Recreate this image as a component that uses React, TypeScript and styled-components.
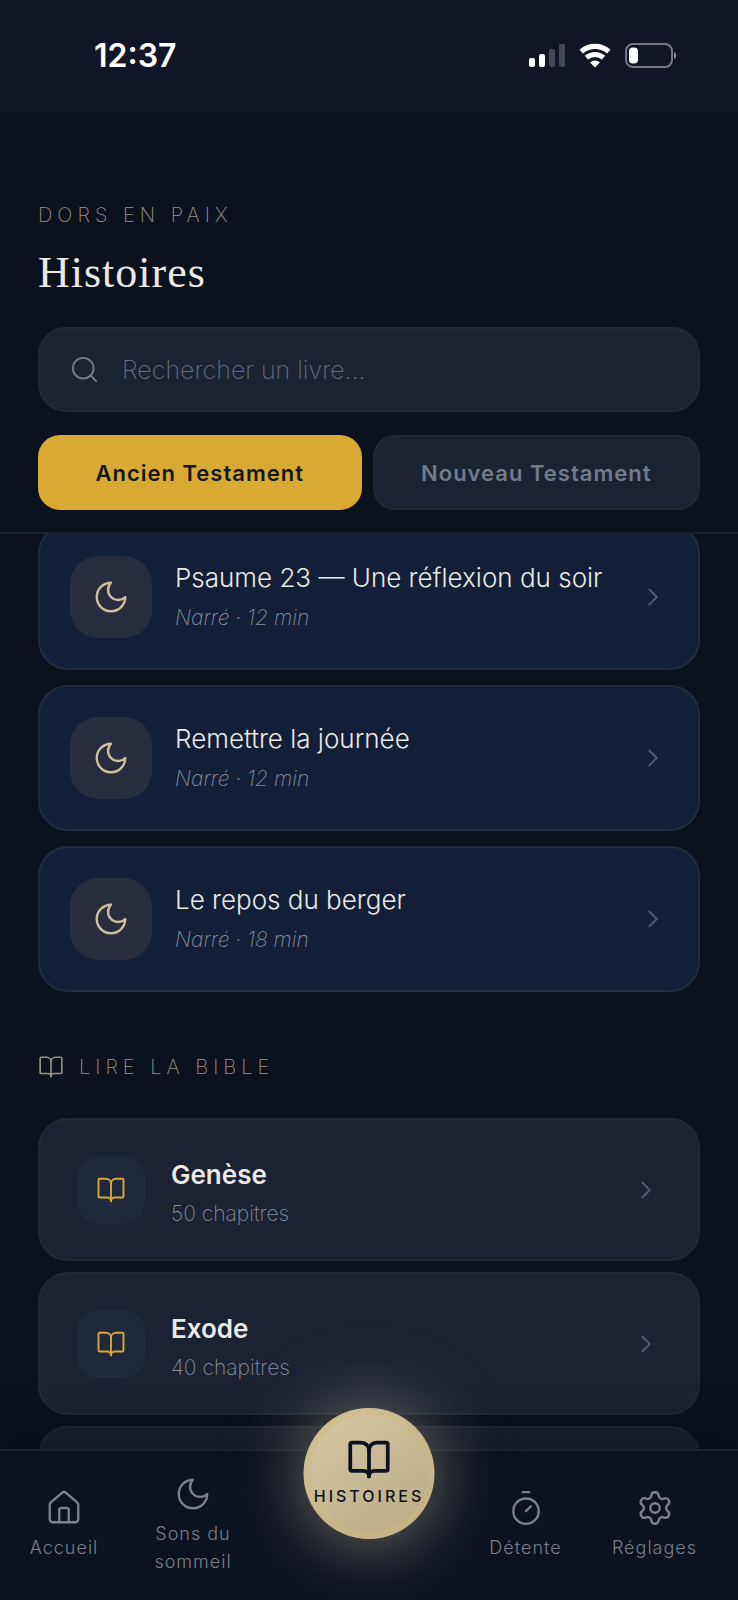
import React from "react";
import styled, { createGlobalStyle, css } from "styled-components";
import { BookOpen, ChevronRight, House, Search, Settings, Timer } from "lucide-react";

const color = {
  page: "#0b121e",
  status: "#101628",
  surface: "#1a2233",
  surfaceLine: "#212939",
  story: "#131e38",
  storyLine: "#242a3f",
  storyTile: "#282c3f",
  bookTile: "#20283c",
  gold: "#d9aa33",
  sand: "#d2c09a",
  sandDim: "#9c917e",
  text: "#ece9e4",
  muted: "#737a8b",
  meta: "#868c9b",
  faint: "#646c7d",
  nav: "#0b1220",
  navText: "#7b808a",
};

const GlobalStyle = createGlobalStyle`
  *, *::before, *::after { box-sizing: border-box; }
  body {
    margin: 0;
    background: ${color.page};
    color: ${color.text};
    font-family: Inter, "Liberation Sans", sans-serif;
    -webkit-font-smoothing: antialiased;
  }
  button, input { font: inherit; }
  h1, h2, p, ul { margin: 0; padding: 0; }
`;

const Screen = styled.div`
  display: flex;
  flex-direction: column;
  height: 100vh;
  overflow: hidden;
`;

const StatusBar = styled.div`
  display: flex;
  flex: none;
  align-items: center;
  justify-content: space-between;
  height: 111px;
  padding: 0 61px 0 94px;
  background: ${color.status};
  color: #fff;
  font-size: 32px;
  font-weight: 600;
`;

const StatusIcons = styled.div`
  display: flex;
  align-items: center;
  gap: 14px;
`;

const Header = styled.header`
  flex: none;
  padding: 90px 38px 22px;
  border-bottom: 2px solid #1a202e;
`;

const Eyebrow = styled.p`
  color: ${color.sandDim};
  font-size: 20px;
  font-weight: 200;
  line-height: 28px;
  letter-spacing: 5px;
  text-transform: uppercase;
`;

const Title = styled.h1`
  margin: 14px 0 24px;
  font-family: "Liberation Serif", serif;
  font-size: 44px;
  font-weight: 400;
  line-height: 60px;
  letter-spacing: 1px;
`;

const SearchField = styled.label`
  display: flex;
  align-items: center;
  gap: 22px;
  height: 85px;
  padding: 0 29px;
  border: 2px solid ${color.surfaceLine};
  border-radius: 28px;
  background: ${color.surface};
  color: ${color.muted};
`;

const SearchInput = styled.input`
  flex: 1;
  min-width: 0;
  padding: 0;
  border: 0;
  outline: 0;
  background: transparent;
  color: ${color.text};
  font-size: 25px;
  font-weight: 200;
  &::placeholder { color: ${color.faint}; opacity: 1; }
`;

const Tabs = styled.div`
  display: flex;
  gap: 11px;
  margin-top: 23px;
`;

const Tab = styled.button<{ $active?: boolean }>`
  flex: 1 1 0;
  height: 75px;
  padding: 0 12px;
  border: 2px solid ${color.surfaceLine};
  border-radius: 22px;
  background: ${color.surface};
  color: ${color.muted};
  font-size: 22px;
  font-weight: 600;
  letter-spacing: 1px;
  white-space: nowrap;
  ${(p) =>
    p.$active &&
    css`
      border: 0;
      background: ${color.gold};
      color: #14171c;
    `}
`;

const Content = styled.main`
  flex: 1;
  min-height: 0;
  padding: 0 38px;
  overflow-y: auto;
  scrollbar-width: none;
`;

const StoryList = styled.ul`
  display: flex;
  flex-direction: column;
  gap: 15px;
  margin-top: -10px;
  list-style: none;
`;

const BookList = styled.ul`
  display: flex;
  flex-direction: column;
  gap: 11px;
  list-style: none;
`;

const Card = styled.button<{ $kind: "story" | "book" }>`
  display: flex;
  align-items: center;
  width: 100%;
  border: 2px solid;
  border-radius: 30px;
  color: inherit;
  text-align: left;
  ${(p) =>
    p.$kind === "story"
      ? css`
          gap: 23px;
          padding: 30px;
          border-color: ${color.storyLine};
          background: ${color.story};
        `
      : css`
          gap: 26px;
          padding: 32px 37px;
          border-color: ${color.surfaceLine};
          background: ${color.surface};
        `}
`;

const LoadingCard = styled.li`
  height: 143px;
  border: 2px solid ${color.surfaceLine};
  border-radius: 30px;
  background: ${color.surface};
`;

const Tile = styled.span<{ $kind: "story" | "book" }>`
  display: flex;
  flex: none;
  align-items: center;
  justify-content: center;
  ${(p) =>
    p.$kind === "story"
      ? css`
          width: 82px;
          height: 82px;
          border-radius: 28px;
          background: ${color.storyTile};
          color: ${color.sand};
        `
      : css`
          width: 68px;
          height: 68px;
          border-radius: 22px;
          background: ${color.bookTile};
          color: ${color.gold};
        `}
`;

const CardText = styled.span`
  display: flex;
  flex: 1;
  flex-direction: column;
  gap: 4px;
  min-width: 0;
`;

const StoryTitle = styled.span`
  font-size: 26px;
  font-weight: 300;
  line-height: 38px;
`;

const StoryMeta = styled.span`
  color: ${color.meta};
  font-size: 21px;
  font-style: italic;
  font-weight: 200;
  line-height: 34px;
`;

const BookTitle = styled.span`
  font-size: 26px;
  font-weight: 600;
  line-height: 45px;
`;

const BookMeta = styled.span`
  color: ${color.meta};
  font-size: 21px;
  font-weight: 200;
  line-height: 26px;
`;

const Chevron = styled(ChevronRight)`
  flex: none;
  color: #535a6e;
`;

const SectionTitle = styled.h2`
  display: flex;
  align-items: center;
  gap: 15px;
  margin: 60px 0 36px;
  color: ${color.sandDim};
  font-size: 20px;
  font-weight: 200;
  line-height: 30px;
  letter-spacing: 5px;
  text-transform: uppercase;
`;

const Nav = styled.nav`
  position: relative;
  z-index: 1;
  display: grid;
  flex: none;
  grid-template-columns: 128fr 130fr 222fr 91fr 167fr;
  align-items: center;
  padding: 24px 0;
  border-top: 2px solid #1c222e;
  background: ${color.nav};
  box-shadow: 0 -8px 50px rgba(4, 8, 16, 0.5);
`;

const NavItem = styled.a<{ $column: number }>`
  display: flex;
  grid-column: ${(p) => p.$column};
  grid-row: 1;
  flex-direction: column;
  align-items: center;
  gap: 7px;
  color: ${color.navText};
  font-size: 18px;
  font-weight: 300;
  line-height: 28px;
  letter-spacing: 1px;
  text-align: center;
  text-decoration: none;
`;

const NavLabel = styled.span`
  max-width: 90px;
`;

const ActiveItem = styled.a`
  position: absolute;
  top: -43px;
  left: 50%;
  display: flex;
  flex-direction: column;
  align-items: center;
  justify-content: center;
  gap: 2px;
  width: 131px;
  height: 131px;
  padding-bottom: 2px;
  border-radius: 50%;
  background: linear-gradient(145deg, #d8c9a6, #b8a883);
  box-shadow:
    inset 0 0 0 7px rgba(206, 184, 134, 0.5),
    0 4px 60px 6px rgba(205, 192, 158, 0.36),
    0 0 110px rgba(205, 192, 158, 0.16);
  color: #0b1220;
  font-size: 16px;
  font-weight: 500;
  line-height: 24px;
  letter-spacing: 3px;
  text-decoration: none;
  text-transform: uppercase;
  transform: translateX(-50%);
`;

function Moon() {
  return (
    <svg width="38" height="38" viewBox="0 0 24 24" fill="none" stroke="currentColor" strokeWidth="1.5" strokeLinecap="round" strokeLinejoin="round" aria-hidden="true">
      <path d="M12 3a6 6 0 0 0 9 9 9 9 0 1 1-9-9Z" />
    </svg>
  );
}

function Signal() {
  return (
    <svg width="36" height="26" viewBox="0 0 36 26" fill="#fff" aria-hidden="true">
      <rect x="0" y="15" width="6" height="9" rx="2" />
      <rect x="10" y="11" width="6" height="13" rx="2" />
      <rect x="20" y="6" width="6" height="18" rx="2" opacity="0.22" />
      <rect x="30" y="1" width="6" height="23" rx="2" opacity="0.22" />
    </svg>
  );
}

function Wifi() {
  return (
    <svg width="32" height="26" viewBox="0 0 32 26" fill="none" stroke="#fff" aria-hidden="true">
      <path d="M2.2 8.6a21 21 0 0 1 27.6 0" strokeWidth="5.2" />
      <path d="M7.5 14.7a12.9 12.9 0 0 1 17 0" strokeWidth="5" />
      <path d="M16 24.6l-4.9-5.2a7.2 7.2 0 0 1 9.8 0z" fill="#fff" stroke="none" />
    </svg>
  );
}

function Battery() {
  return (
    <svg width="52" height="26" viewBox="0 0 52 26" fill="none" aria-hidden="true">
      <rect x="1" y="1" width="46" height="23" rx="7" stroke="#fff" strokeOpacity="0.42" strokeWidth="2" />
      <rect x="4" y="4.5" width="9" height="16" rx="4" fill="#fff" />
      <path d="M49 9c3 1 3 6 0 7z" fill="#fff" fillOpacity="0.5" />
    </svg>
  );
}

const stories = [
  { title: "Psaume 23 — Une réflexion du soir", meta: "Narré · 12 min" },
  { title: "Remettre la journée", meta: "Narré · 12 min" },
  { title: "Le repos du berger", meta: "Narré · 18 min" },
];

const books = [
  { title: "Genèse", meta: "50 chapitres" },
  { title: "Exode", meta: "40 chapitres" },
];

export default function App() {
  return (
    <>
      <GlobalStyle />
      <Screen>
        <StatusBar>
          <span>12:37</span>
          <StatusIcons>
            <Signal />
            <Wifi />
            <Battery />
          </StatusIcons>
        </StatusBar>

        <Header>
          <Eyebrow>Dors en paix</Eyebrow>
          <Title>Histoires</Title>
          <SearchField>
            <Search size={31} strokeWidth={1.5} aria-hidden="true" />
            <SearchInput type="text" aria-label="Rechercher un livre" placeholder="Rechercher un livre..." />
          </SearchField>
          <Tabs>
            <Tab type="button" $active aria-pressed="true">Ancien Testament</Tab>
            <Tab type="button" aria-pressed="false">Nouveau Testament</Tab>
          </Tabs>
        </Header>

        <Content>
          <StoryList>
            {stories.map((story) => (
              <li key={story.title}>
                <Card type="button" $kind="story">
                  <Tile $kind="story"><Moon /></Tile>
                  <CardText>
                    <StoryTitle>{story.title}</StoryTitle>
                    <StoryMeta>{story.meta}</StoryMeta>
                  </CardText>
                  <Chevron size={30} strokeWidth={1.5} aria-hidden="true" />
                </Card>
              </li>
            ))}
          </StoryList>

          <SectionTitle>
            <BookOpen size={26} strokeWidth={1.5} aria-hidden="true" />
            Lire la Bible
          </SectionTitle>

          <BookList>
            {books.map((book) => (
              <li key={book.title}>
                <Card type="button" $kind="book">
                  <Tile $kind="book">
                    <BookOpen size={30} strokeWidth={1.5} aria-hidden="true" />
                  </Tile>
                  <CardText>
                    <BookTitle>{book.title}</BookTitle>
                    <BookMeta>{book.meta}</BookMeta>
                  </CardText>
                  <Chevron size={30} strokeWidth={1.5} aria-hidden="true" />
                </Card>
              </li>
            ))}
            <LoadingCard aria-hidden="true" />
          </BookList>
        </Content>

        <Nav aria-label="Navigation principale">
          <NavItem href="#accueil" $column={1}>
            <House size={38} strokeWidth={1.5} aria-hidden="true" />
            <NavLabel>Accueil</NavLabel>
          </NavItem>
          <NavItem href="#sons" $column={2}>
            <Moon />
            <NavLabel>Sons du sommeil</NavLabel>
          </NavItem>
          <NavItem href="#detente" $column={4}>
            <Timer size={38} strokeWidth={1.5} aria-hidden="true" />
            <NavLabel>Détente</NavLabel>
          </NavItem>
          <NavItem href="#reglages" $column={5}>
            <Settings size={38} strokeWidth={1.5} aria-hidden="true" />
            <NavLabel>Réglages</NavLabel>
          </NavItem>
          <ActiveItem href="#histoires" aria-current="page">
            <BookOpen size={45} strokeWidth={2} aria-hidden="true" />
            Histoires
          </ActiveItem>
        </Nav>
      </Screen>
    </>
  );
}
